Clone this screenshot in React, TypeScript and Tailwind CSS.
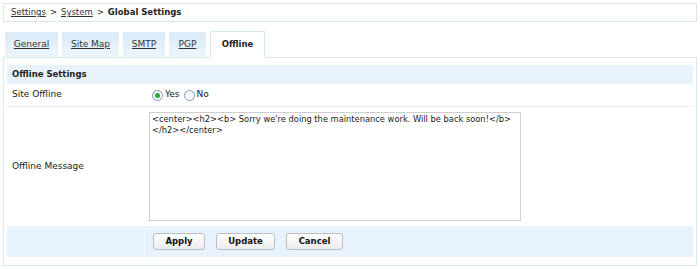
import React from "react";

const font = { fontFamily: '"DejaVu Sans", Verdana, Tahoma, sans-serif' };

function Radio({ checked, label }: { checked: boolean; label: string }) {
  return (
    <label className="flex items-center gap-[2px]">
      <span className="w-[11px] h-[11px] rounded-full border border-[#7a9bb8] bg-gradient-to-b from-[#f4f8fb] to-[#ffffff] flex items-center justify-center">
        {checked && <span className="w-[5px] h-[5px] rounded-full bg-[#2fa53c]" />}
      </span>
      <span>{label}</span>
    </label>
  );
}

function Tab({ label, w, active }: { label: string; w: string; active?: boolean }) {
  if (active) {
    return (
      <div className={`${w} h-[27px] -mb-px flex items-center justify-center bg-white border border-[#d4ebe6] border-b-white font-bold text-[#222] text-[8.5px]`}>
        {label}
      </div>
    );
  }
  return (
    <div className={`${w} h-[25px] flex items-center justify-center bg-gradient-to-b from-[#d9eaf7] to-[#eef5fb] text-[#333] underline text-[9px]`}>
      {label}
    </div>
  );
}

function Button({ label, w }: { label: string; w: string }) {
  return (
    <button
      className={`${w} h-[17px] rounded-[3px] border border-[#b9bfc4] bg-gradient-to-b from-[#ffffff] to-[#ececec] text-[8.5px] font-bold text-[#111] flex items-center justify-center`}
    >
      {label}
    </button>
  );
}

export default function App() {
  return (
    <div className="w-[700px] h-[269px] bg-white text-[#222] text-[9px] overflow-hidden" style={font}>
      <div className="mx-[3px] mt-[3px] h-[19px] border border-[#d5e8ee] flex items-center pl-[7px] text-[8.5px]">
        <span className="underline text-[#333]">Settings</span>
        <span className="mx-[4px]">&gt;</span>
        <span className="underline text-[#333]">System</span>
        <span className="mx-[4px]">&gt;</span>
        <span className="font-bold">Global Settings</span>
      </div>

      <div className="mt-[9px] pl-[5px] flex items-end gap-[4px] relative z-10">
        <Tab label="General" w="w-[53px]" />
        <Tab label="Site Map" w="w-[57px]" />
        <Tab label="SMTP" w="w-[42px]" />
        <Tab label="PGP" w="w-[37px]" />
        <Tab label="Offline" w="w-[55px]" active />
      </div>

      <div className="mx-[3px] border border-[#d4ebe6] px-[3px] pt-[7px] pb-[7px] h-[209px]">
        <div className="h-[19px] bg-[#e8f2fb] flex items-center pl-[5px] font-bold text-[8.5px]">
          Offline Settings
        </div>
        <div className="flex h-[23px] items-center border-b border-[#e9eff1]">
          <div className="w-[137px] pl-[5px]">Site Offline</div>
          <div className="flex items-center gap-[4px] pl-[8px]">
            <Radio checked label="Yes" />
            <Radio checked={false} label="No" />
          </div>
        </div>
        <div className="flex h-[119px]">
          <div className="w-[137px] pl-[5px] flex items-center">Offline Message</div>
          <div className="pl-[5px] pt-[5px]">
            <textarea
              readOnly
              className="w-[372px] h-[109px] border border-[#cfcfcf] resize-none px-[2px] py-[1px] text-[8.3px] leading-[11px] text-[#222] outline-none"
              style={font}
              defaultValue={"<center><h2><b> Sorry we're doing the maintenance work. Will be back soon!</b>\n</h2></center>"}
            />
          </div>
        </div>
        <div className="flex h-[31px] bg-[#e7f2fc]">
          <div className="w-[137px]" />
          <div className="flex-1 border-l border-[#eef6fd] flex items-center pl-[8px] gap-[11px]">
            <Button label="Apply" w="w-[52px]" />
            <Button label="Update" w="w-[59px]" />
            <Button label="Cancel" w="w-[57px]" />
          </div>
        </div>
      </div>
    </div>
  );
}
